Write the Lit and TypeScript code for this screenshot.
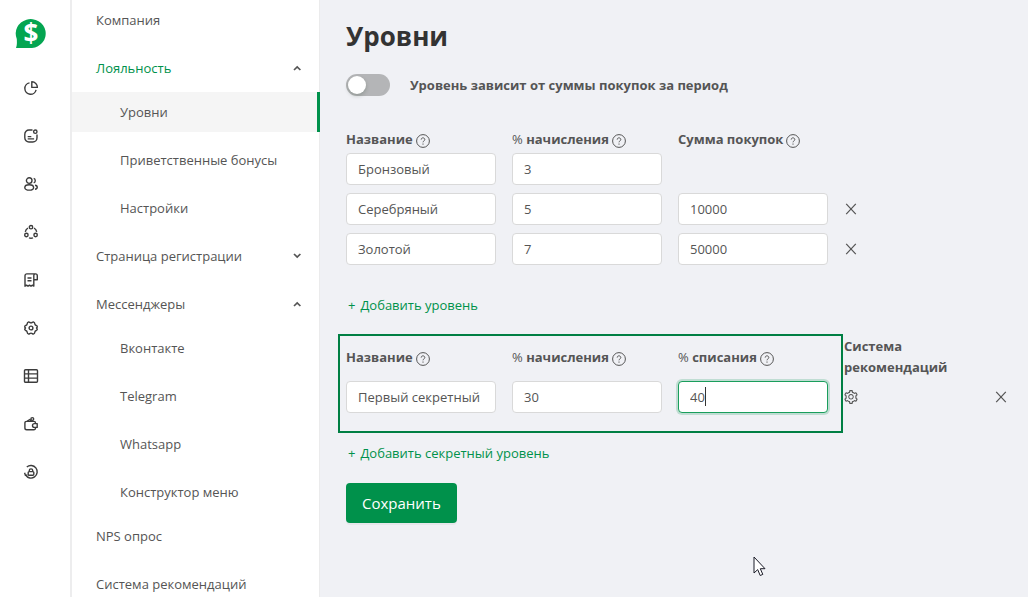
import { LitElement, html, css, svg, nothing } from "lit";
import { customElement, property, state } from "lit/decorators.js";
import { classMap } from "lit/directives/class-map.js";

const railIcons: Record<string, { label: string; art: unknown }> = {
  stats: {
    label: "Статистика",
    art: svg`<path d="M5.500 1.900A5.700 5.700 0 1 0 12.100 8.800"/><path d="M7.800.8v5.600h5.600A5.500 5.500 0 0 0 7.800.8z"/>`,
  },
  news: {
    label: "Новости",
    art: svg`<path d="M8.500 1H5A4.200 4.200 0 0 0 .8 5.200v3.600A4.200 4.200 0 0 0 5 13h3.800A4.200 4.200 0 0 0 13 8.800V5.500"/><circle cx="11.300" cy="2.700" r="1.700"/><path d="M3.700 7.600h3.600M3.700 9.900h6.400"/>`,
  },
  clients: {
    label: "Клиенты",
    art: svg`<circle cx="5.200" cy="3.600" r="2.800"/><ellipse cx="5.200" cy="10.400" rx="4.400" ry="2.700"/><path d="M9.700 1.400a2.400 2.400 0 0 1 0 4.500M11 8.300c3 .4 3 3.600 0 4"/>`,
  },
  network: {
    label: "Сеть",
    art: svg`<circle cx="7" cy="2.200" r="1.700"/><circle cx="2.400" cy="10" r="1.700"/><circle cx="11.600" cy="10" r="1.700"/><path d="M4 3A5.500 5.500 0 0 0 1.300 6.800M10 3a5.500 5.500 0 0 1 2.700 3.800M5 12.800a5.500 5.500 0 0 0 4 0"/>`,
  },
  receipts: {
    label: "Чеки",
    art: svg`<path d="M11.500.9H2.800A1.800 1.800 0 0 0 1 2.700V13.200l1.500-1 1.500 1 1.500-1 1.500 1 1.500-1 1.300.9V2.600A1.700 1.700 0 0 1 11.500.9a1.800 1.800 0 0 1 1.800 1.800v4H9.900"/><path d="M3.500 5h4M3.500 7.800h4"/>`,
  },
  settings: {
    label: "Настройки",
    art: svg`<circle cx="7" cy="7" r="1.900"/><path d="M4.700.9c.9 0 1.200 1 2.300 1s1.400-1 2.300-1c1.300.4 1.500 1 1.500 1.900 0 1 .5 1.400 1.400 1.700 1 .4 1.300.9 1.100 1.500-.2.500-.8.600-.8 1s.6.500.8 1c.2.600-.1 1.100-1.100 1.500-.9.300-1.400.7-1.400 1.700 0 .9-.2 1.500-1.500 1.900-.9 0-1.200-1-2.300-1s-1.400 1-2.300 1c-1.300-.4-1.500-1-1.500-1.900 0-1-.5-1.400-1.400-1.700C.8 9.100.5 8.600.7 8c.2-.5.8-.6.8-1s-.6-.5-.8-1c-.2-.6.1-1.100 1.100-1.500.9-.3 1.400-.7 1.400-1.700 0-.9.200-1.500 1.500-1.900z"/>`,
  },
  table: {
    label: "Таблица",
    art: svg`<rect x=".5" y=".7" width="13" height="12.600" rx="1"/><path d="M4.500.7v12.600M.5 4.900h13M.5 9.100h13"/>`,
  },
  wallet: {
    label: "Кошелёк",
    art: svg`<path d="M11.500 6.400V6a1.600 1.600 0 0 0-1.600-1.600H2.500A1.600 1.600 0 0 0 .9 6v5a1.800 1.800 0 0 0 1.800 1.800h7.100A1.700 1.700 0 0 0 11.500 11v-.4"/><path d="M13.200 6.600h-2.800a1.900 1.900 0 0 0 0 3.800h2.800zM3.300 4.100l2.500-1.600 1.700 1.700"/><circle cx="8.300" cy="2" r="1.400"/>`,
  },
  access: {
    label: "Доступ",
    art: svg`<path d="M2.800 2A6.300 6.300 0 1 1 1.600 10.200M.6 7.700l.8 2.700 2-.6"/><rect x="4.200" y="6.600" width="5.600" height="3.600" rx="1"/><path d="M5.300 6.500V5.600a1.700 1.700 0 0 1 3.400 0v.9"/>`,
  },
};

@customElement("icon-rail")
export class IconRail extends LitElement {
  static styles = css`
    :host { display: block; flex: none; width: 70px; background: #fff; border-right: 2px solid #ededee; }
    .rail { display: flex; flex-direction: column; align-items: center; padding: 16px 8px 0 0; }
    .logo { display: block; width: 32px; height: 34px; margin-bottom: 18px; }
    .logo text { font: 700 26px "Open Sans", "Noto Sans", sans-serif; fill: #fff; }
    .item { display: flex; align-items: center; justify-content: center; width: 40px; height: 40px; margin-bottom: 8px; color: #3c3c3c; }
    .icon { width: 14px; height: 14px; overflow: visible; fill: none; stroke: currentColor; stroke-width: 1.4; stroke-linejoin: round; }
  `;
  render() {
    return html`<nav class="rail" aria-label="Разделы">
      <svg class="logo" viewBox="0 0 32 34" aria-hidden="true">
        <path d="M1 32C2 29 2 27 1.800 23A15 14.500 0 1 1 17 32z" fill="#04a551" />
        <text x="16" y="27" text-anchor="middle">$</text>
      </svg>
      ${Object.values(railIcons).map(
        (i) => html`<a class="item" href="#" aria-label=${i.label}><svg class="icon" viewBox="0 0 14 14">${i.art}</svg></a>`
      )}
    </nav>`;
  }
}

interface MenuEntry {
  title: string;
  open?: boolean;
  active?: boolean;
  expandable?: boolean;
  children?: { title: string; active?: boolean }[];
}

@customElement("side-menu")
export class SideMenu extends LitElement {
  @state() private entries: MenuEntry[] = [
    { title: "Компания" },
    {
      title: "Лояльность", expandable: true, open: true, active: true,
      children: [{ title: "Уровни", active: true }, { title: "Приветственные бонусы" }, { title: "Настройки" }],
    },
    { title: "Страница регистрации", expandable: true },
    {
      title: "Мессенджеры", expandable: true, open: true,
      children: [{ title: "Вконтакте" }, { title: "Telegram" }, { title: "Whatsapp" }, { title: "Конструктор меню" }],
    },
    { title: "NPS опрос" },
    { title: "Система рекомендаций" },
  ];
  static styles = css`
    :host { display: block; flex: none; width: 248px; overflow: hidden; background: #fff; box-shadow: inset -1px 0 #ebebec; }
    ul { list-style: none; margin: 0; padding: 0; }
    .row { display: flex; align-items: center; justify-content: space-between; box-sizing: border-box; width: 100%; height: 40px; padding: 0 18px 0 24px; margin: 0 0 8px; border: 0; background: none; color: #555; font: inherit; text-align: left; text-decoration: none; }
    .open { margin-bottom: 4px; }
    .child { padding-left: 48px; }
    .current { background: #f5f5f5; border-right: 3px solid #00914b; }
    .section { color: #00914b; }
    .tight { margin-bottom: 4px; }
    .chevron { width: 9px; height: 6px; fill: none; stroke: #555; stroke-width: 1.7; }
  `;
  private toggle(entry: MenuEntry) {
    this.entries = this.entries.map((e) => (e === entry ? { ...e, open: !e.open } : e));
  }
  render() {
    return html`<nav aria-label="Меню"><ul>
      ${this.entries.map(
        (e, n) => html`<li>
          ${e.expandable
            ? html`<button type="button" class=${classMap({ row: true, open: !!e.open, section: !!e.active })}
                aria-expanded=${e.open ? "true" : "false"} @click=${() => this.toggle(e)}>
                <span>${e.title}</span>
                <svg class="chevron" viewBox="0 0 9 6"><path d=${e.open ? "M1 5l3.200-3L7.400 5" : "M1 1l3.200 3L7.400 1"} /></svg>
              </button>`
            : html`<a class="row" href="#">${e.title}</a>`}
          ${e.open && e.children
            ? html`<ul>${e.children.map(
                (c, i, all) => html`<li><a href="#" class=${classMap({
                  row: true, child: true, current: !!c.active,
                  tight: i === all.length - 1 && !this.entries[n + 1]?.expandable,
                })}>${c.title}</a></li>`
              )}</ul>`
            : nothing}
        </li>`
      )}
    </ul></nav>`;
  }
}

@customElement("column-head")
export class ColumnHead extends LitElement {
  @property() text = "";
  @property({ type: Boolean }) percent = false;
  static styles = css`
    :host { display: flex; align-items: center; gap: 3px; font-weight: 700; color: #555; }
    .percent { font-weight: 400; }
    .help { flex: none; width: 14px; height: 14px; padding-top: 3px; fill: none; stroke: #555; }
  `;
  render() {
    return html`<span>${this.percent ? html`<span class="percent">%</span> ` : nothing}${this.text}</span>
      <svg class="help" viewBox="0 0 14 14" role="img" aria-label="Подсказка">
        <circle cx="7" cy="7" r="6.400" />
        <path d="M5.200 5.600c0-2.400 3.600-2.300 3.600 0 0 1.300-1.800 1.300-1.800 2.700M7 9.500v1.200" />
      </svg>`;
  }
}

@customElement("app-root")
export class AppRoot extends LitElement {
  private levels = [
    { name: "Бронзовый", rate: "3" },
    { name: "Серебряный", rate: "5", sum: "10000" },
    { name: "Золотой", rate: "7", sum: "50000" },
  ];
  static styles = css`
    :host { display: flex; position: relative; height: 100vh; overflow: hidden; background: #f0f1f5; color: #555; font: 13px/21px "Open Sans", "Noto Sans", sans-serif; }
    .main { flex: 1; min-width: 0; padding: 15px 8px 0 26px; }
    h1 { margin: 0 0 17px; color: #333; font-size: 26px; line-height: 42px; font-weight: 700; }
    .switch-row { display: flex; align-items: center; gap: 20px; height: 22px; font-weight: 700; }
    .switch { appearance: none; flex: none; display: flex; box-sizing: border-box; width: 44px; height: 22px; margin: 0; padding: 2px; border-radius: 11px; background: #b4b5b7; }
    .switch::before { content: ""; width: 18px; height: 18px; border-radius: 50%; background: #fff; box-shadow: 0 2px 4px rgba(0, 35, 11, 0.2); }
    .switch:checked { justify-content: flex-end; background: #00914b; }
    .levels { display: grid; grid-template-columns: repeat(3, 150px) minmax(14px, 134px) 14px; column-gap: 16px; row-gap: 8px; align-items: center; margin-top: 33px; }
    .heads { display: grid; grid-column: 1 / -1; grid-template-columns: subgrid; align-items: center; margin-bottom: -5px; }
    .secret { position: relative; margin-top: 19px; }
    .frame { position: absolute; inset: -2px auto -20px -8px; box-sizing: border-box; width: 505px; border: 2px solid #007f43; pointer-events: none; }
    .wide { font-weight: 700; }
    .field { box-sizing: border-box; width: 100%; height: 32px; padding: 0 11px; border: 1px solid #d9d9d9; border-radius: 4px; background: #fff; color: #555; font: inherit; outline: none; }
    .editing { border-color: #1a9e5c; box-shadow: 0 0 0 2px rgba(0, 145, 75, 0.2); }
    .cell { position: relative; }
    .caret { position: absolute; left: 27px; top: 6px; width: 1px; height: 19px; background: #333; }
    .first { grid-column: 1; }
    .tool { display: flex; width: 14px; height: 14px; padding: 0; border: 0; background: none; color: #555; }
    .tool svg { width: 14px; height: 14px; }
    .cross { fill: none; stroke: currentColor; stroke-width: 1.2; }
    .gear { fill: currentColor; }
    .add { display: flex; gap: 5px; margin: 28px 0 0; padding: 0 2px; border: 0; background: none; color: #00914b; font: inherit; line-height: 24px; }
    .save { height: 40px; margin-top: 18px; padding: 0 16px; border: 0; border-radius: 4px; background: #00914b; box-shadow: 0 2px 0 rgba(0, 0, 0, 0.04); color: #fff; font: inherit; font-size: 15px; }
    .pointer { position: absolute; left: 753px; top: 556px; width: 13px; height: 21px; }
  `;
  private cross(label: string) {
    return html`<button type="button" class="tool" aria-label=${label}>
      <svg class="cross" viewBox="0 0 14 14"><path d="M2.200 1.800l9.600 10.400M11.800 1.800L2.200 12.200" /></svg>
    </button>`;
  }
  render() {
    return html`
      <icon-rail></icon-rail>
      <side-menu></side-menu>
      <main class="main">
        <h1>Уровни</h1>
        <label class="switch-row"><input class="switch" type="checkbox" role="switch" />Уровень зависит от суммы покупок за период</label>
        <section class="levels">
          <div class="heads">
            <column-head text="Название"></column-head>
            <column-head percent text="начисления"></column-head>
            <column-head text="Сумма покупок"></column-head>
          </div>
          ${this.levels.map(
            (l) => html`
              <input class="field first" aria-label="Название" .value=${l.name} />
              <input class="field" aria-label="% начисления" .value=${l.rate} />
              ${l.sum
                ? html`<input class="field" aria-label="Сумма покупок" .value=${l.sum} />${this.cross("Удалить уровень")}`
                : nothing}
            `
          )}
        </section>
        <button type="button" class="add"><span>+</span><span>Добавить уровень</span></button>
        <section class="levels secret">
          <div class="heads">
            <column-head text="Название"></column-head>
            <column-head percent text="начисления"></column-head>
            <column-head percent text="списания"></column-head>
            <span class="wide">Система рекомендаций</span>
          </div>
          <input class="field first" aria-label="Название" .value=${"Первый секретный"} />
          <input class="field" aria-label="% начисления" .value=${"30"} />
          <div class="cell">
            <input class="field editing" aria-label="% списания" .value=${"40"} />
            <span class="caret"></span>
          </div>
          <button type="button" class="tool" aria-label="Настроить">
            <svg class="gear" viewBox="64 64 896 896"><path d="M924.8 625.7l-65.5-56c3.1-19 4.7-38.4 4.7-57.8s-1.6-38.8-4.7-57.8l65.5-56a32.03 32.03 0 009.3-35.2l-.9-2.6a443.74 443.74 0 00-79.7-137.9l-1.8-2.1a32.12 32.12 0 00-35.1-9.5l-81.3 28.9c-30-24.6-63.5-44-99.7-57.6l-15.7-85a32.05 32.05 0 00-25.8-25.7l-2.7-.5c-52.1-9.4-106.9-9.4-159 0l-2.7.5a32.05 32.05 0 00-25.8 25.7l-15.8 85.4a351.86 351.86 0 00-99 57.4l-81.9-29.1a32 32 0 00-35.1 9.5l-1.8 2.1a446.02 446.02 0 00-79.7 137.9l-.9 2.6c-4.5 12.5-.8 26.5 9.3 35.2l66.3 56.6c-3.1 18.8-4.6 38-4.6 57.1 0 19.2 1.5 38.4 4.6 57.1L99 625.5a32.03 32.03 0 00-9.3 35.2l.9 2.6c18.1 50.4 44.9 96.9 79.7 137.9l1.8 2.1a32.12 32.12 0 0035.1 9.5l81.9-29.1c29.8 24.5 63.1 43.9 99 57.4l15.8 85.4a32.05 32.05 0 0025.8 25.7l2.7.5a449.4 449.4 0 00159 0l2.7-.5a32.05 32.05 0 0025.8-25.7l15.7-85a350 350 0 0099.7-57.6l81.3 28.9a32 32 0 0035.1-9.5l1.8-2.1c34.8-41.1 61.6-87.5 79.7-137.9l.9-2.6c4.5-12.3.8-26.3-9.3-35zM788.3 465.9c2.5 15.1 3.8 30.6 3.8 46.1s-1.3 31-3.8 46.1l-6.6 40.1 74.7 63.9a370.03 370.03 0 01-42.6 73.6L721 702.8l-31.4 25.8c-23.9 19.6-50.5 35-79.3 45.8l-38.1 14.3-17.9 97a377.5 377.5 0 01-85 0l-17.9-97.2-37.8-14.5c-28.5-10.8-55-26.2-78.7-45.7l-31.4-25.9-93.4 33.2c-17-22.9-31.2-47.6-42.6-73.6l75.5-64.5-6.5-40c-2.4-14.9-3.7-30.3-3.7-45.5 0-15.3 1.2-30.6 3.7-45.5l6.5-40-75.5-64.5c11.3-26.1 25.6-50.7 42.6-73.6l93.4 33.2 31.4-25.9c23.7-19.5 50.2-34.9 78.7-45.7l37.900-14.3 17.9-97.2c28.1-3.2 56.8-3.2 85 0l17.9 97 38.1 14.3c28.7 10.8 55.4 26.2 79.3 45.8l31.400 25.8 92.8-32.9c17 22.9 31.2 47.6 42.6 73.6L781.8 426l6.5 39.9zM512 326c-97.2 0-176 78.8-176 176s78.8 176 176 176 176-78.8 176-176-78.8-176-176-176zm79.2 255.2A111.6 111.6 0 01512 614c-29.9 0-58-11.7-79.2-32.8A111.6 111.6 0 01400 502c0-29.9 11.7-58 32.8-79.2C454 401.6 482.1 390 512 390c29.9 0 58 11.6 79.2 32.8A111.6 111.6 0 01624 502c0 29.9-11.700 58-32.8 79.2z" /></svg>
          </button>
          ${this.cross("Удалить секретный уровень")}
          <div class="frame"></div>
        </section>
        <button type="button" class="add"><span>+</span><span>Добавить секретный уровень</span></button>
        <button type="button" class="save">Сохранить</button>
      </main>
      <svg class="pointer" viewBox="0 0 13 21" aria-hidden="true">
        <path d="M1 1v16l3.700-3.400 2.500 5.900 2.600-1.100-2.500-5.700H12z" fill="#fff" stroke="#1b1c28" />
      </svg>
    `;
  }
}
